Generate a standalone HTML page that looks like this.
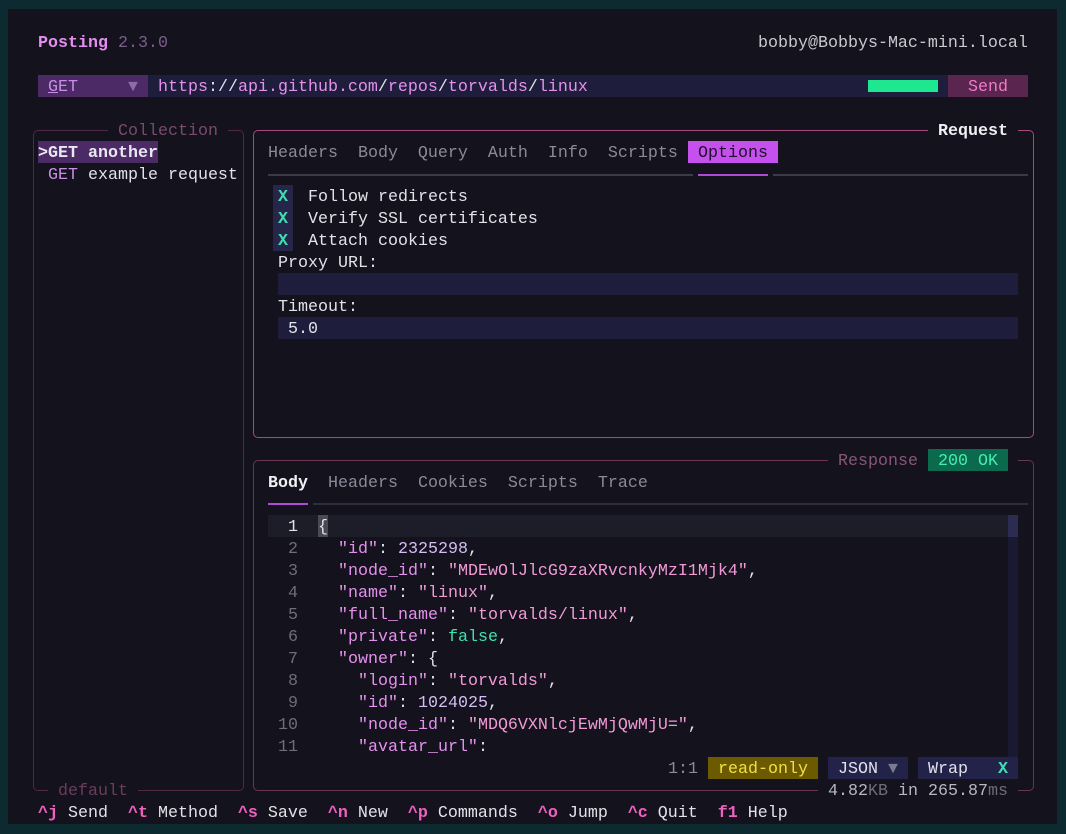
<!DOCTYPE html>
<html><head><meta charset="utf-8"><style>
*{margin:0;padding:0;box-sizing:border-box}
body{width:1066px;height:834px;background:#0c2a30;position:relative;overflow:hidden;font-family:"Liberation Mono","DejaVu Sans Mono",monospace;font-size:16.67px;color:#e2e2ea}
#win{position:absolute;left:8px;top:9px;width:1049px;height:815px;background:#13121d}
.t{position:absolute;white-space:pre;line-height:22px;height:22px;padding-top:2px}
.box{position:absolute;border:1.5px solid;border-radius:5px}
.lbl{position:absolute;white-space:pre;line-height:22px;height:22px;padding-top:2px;background:#13121d}
.m{color:#8c8a99}
.k{color:#e590ec}.s{color:#f29ad6}.n{color:#d4bdf5}.b{color:#3fe0b0}.p{color:#e2e2ea}
.ln{color:#6e6d7a;text-align:right;width:30px}
.pk{color:#f060c0;font-weight:bold}
</style></head><body>
<div id="win"></div>
<div class="t" style="left:38px;top:31px"><b style="color:#e48ff0">Posting</b> <span style="color:#7a5f8a">2.3.0</span></div>
<div class="t" style="left:758px;top:31px;color:#c8c8d0">bobby@Bobbys-Mac-mini.local</div>

<div class="t" style="left:38px;top:75px;width:110px;background:#4b2a66;color:#c98ee6">&nbsp;<u>G</u>ET     <span style="color:#8e6aa8">▼</span></div>
<div class="t" style="left:148px;top:75px;width:800px;background:#1e1e3c"></div>
<div class="t" style="left:158px;top:75px;color:#e590ec">https<span style="color:#e2e2ea">://</span>api.github.com<span style="color:#e2e2ea">/</span>repos<span style="color:#e2e2ea">/</span>torvalds<span style="color:#e2e2ea">/</span>linux</div>
<div style="position:absolute;left:868px;top:80px;width:70px;height:12px;background:#1ee88f"></div>
<div class="t" style="left:948px;top:75px;width:80px;background:#5a2650;color:#f07ac8;text-align:center">Send</div>

<!-- Collection -->
<div class="box" style="left:33px;top:130px;width:211px;height:661px;border-color:#4e2a46"></div>
<div class="lbl" style="left:108px;top:119px;color:#7b4a6c"> Collection </div>
<div class="lbl" style="left:48px;top:779px;color:#6a3d5c"> default </div>
<div class="t" style="left:38px;top:141px;width:120px;background:#4b2a66;color:#e8e8f0;font-weight:bold">&gt;GET another</div>
<div class="t" style="left:38px;top:163px"> <span style="color:#c98ee6">GET</span> example request</div>

<!-- Request -->
<div class="box" style="left:253px;top:130px;width:781px;height:308px;border-color:#a8487f"></div>
<div class="lbl" style="left:928px;top:119px;font-weight:bold;color:#f0f0f4"> Request </div>
<div class="t m" style="left:268px;top:141px">Headers  Body  Query  Auth  Info  Scripts</div>
<div class="t" style="left:688px;top:141px;width:90px;background:#c650ee;color:#1e0f2a"> Options</div>
<div style="position:absolute;left:268px;top:174px;width:425px;height:2px;background:#3a3a48"></div>
<div style="position:absolute;left:698px;top:174px;width:70px;height:2px;background:#b048d8"></div>
<div style="position:absolute;left:773px;top:174px;width:255px;height:2px;background:#3a3a48"></div>
<div class="t" style="left:273px;top:185px;width:20px;height:66px;background:#25264a"></div>
<div class="t b" style="left:278px;top:185px;font-weight:bold">X</div>
<div class="t b" style="left:278px;top:207px;font-weight:bold">X</div>
<div class="t b" style="left:278px;top:229px;font-weight:bold">X</div>
<div class="t" style="left:308px;top:185px">Follow redirects</div>
<div class="t" style="left:308px;top:207px">Verify SSL certificates</div>
<div class="t" style="left:308px;top:229px">Attach cookies</div>
<div class="t" style="left:278px;top:251px">Proxy URL:</div>
<div class="t" style="left:278px;top:273px;width:740px;background:#1e1e3c"></div>
<div class="t" style="left:278px;top:295px">Timeout:</div>
<div class="t" style="left:278px;top:317px;width:740px;background:#1e1e3c"> 5.0</div>

<!-- Response -->
<div class="box" style="left:253px;top:460px;width:781px;height:331px;border-color:#6a3556"></div>
<div class="lbl" style="left:828px;top:449px;color:#8a5578"> Response </div>
<div class="t" style="left:918px;top:449px;width:100px;background:#13121d"></div>
<div class="t" style="left:928px;top:449px;width:80px;background:#0b6a4e;color:#3ff0b0;text-align:center">200 OK</div>
<div class="t" style="left:268px;top:471px"><b style="color:#f0f0f4">Body</b>  <span class="m">Headers  Cookies  Scripts  Trace</span></div>
<div style="position:absolute;left:268px;top:503px;width:40px;height:2px;background:#b048d8"></div>
<div style="position:absolute;left:313px;top:503px;width:715px;height:2px;background:#2e2e3a"></div>
<div style="position:absolute;left:268px;top:515px;width:740px;height:22px;background:#1d1c29"></div>
<div style="position:absolute;left:1008px;top:515px;width:10px;height:242px;background:#191932"></div>
<div style="position:absolute;left:1008px;top:515px;width:10px;height:22px;background:#2c2c52"></div>
<div class="t ln" style="left:268px;top:515px;color:#e2e2ea">1</div>
<div class="t" style="left:318px;top:515px;background:#4a4a55;width:10px">{</div>
<div class="t ln" style="left:268px;top:537px">2</div><div class="t" style="left:318px;top:537px">  <span class="k">"id"</span>: <span class="n">2325298</span>,</div>
<div class="t ln" style="left:268px;top:559px">3</div><div class="t" style="left:318px;top:559px">  <span class="k">"node_id"</span>: <span class="s">"MDEwOlJlcG9zaXRvcnkyMzI1Mjk4"</span>,</div>
<div class="t ln" style="left:268px;top:581px">4</div><div class="t" style="left:318px;top:581px">  <span class="k">"name"</span>: <span class="s">"linux"</span>,</div>
<div class="t ln" style="left:268px;top:603px">5</div><div class="t" style="left:318px;top:603px">  <span class="k">"full_name"</span>: <span class="s">"torvalds/linux"</span>,</div>
<div class="t ln" style="left:268px;top:625px">6</div><div class="t" style="left:318px;top:625px">  <span class="k">"private"</span>: <span class="b">false</span>,</div>
<div class="t ln" style="left:268px;top:647px">7</div><div class="t" style="left:318px;top:647px">  <span class="k">"owner"</span>: {</div>
<div class="t ln" style="left:268px;top:669px">8</div><div class="t" style="left:318px;top:669px">    <span class="k">"login"</span>: <span class="s">"torvalds"</span>,</div>
<div class="t ln" style="left:268px;top:691px">9</div><div class="t" style="left:318px;top:691px">    <span class="k">"id"</span>: <span class="n">1024025</span>,</div>
<div class="t ln" style="left:268px;top:713px">10</div><div class="t" style="left:318px;top:713px">    <span class="k">"node_id"</span>: <span class="s">"MDQ6VXNlcjEwMjQwMjU="</span>,</div>
<div class="t ln" style="left:268px;top:735px">11</div><div class="t" style="left:318px;top:735px">    <span class="k">"avatar_url"</span>:</div>
<div class="t m" style="left:668px;top:757px">1:1</div>
<div class="t" style="left:708px;top:757px;width:110px;background:#6b5a00;color:#f2e040;text-align:center">read-only</div>
<div class="t" style="left:828px;top:757px;width:80px;background:#23234a"> JSON <span style="color:#7a7a90">▼</span></div>
<div class="t" style="left:918px;top:757px;width:100px;background:#23234a"> Wrap   <b class="b">X</b></div>
<div class="lbl" style="left:818px;top:779px;color:#b8b8c4"> 4.82<span style="color:#6e6d7a">KB</span> in 265.87<span style="color:#6e6d7a">ms</span> </div>

<!-- Footer -->
<div class="t" style="left:38px;top:801px"><span class="pk">^j</span> Send  <span class="pk">^t</span> Method  <span class="pk">^s</span> Save  <span class="pk">^n</span> New  <span class="pk">^p</span> Commands  <span class="pk">^o</span> Jump  <span class="pk">^c</span> Quit  <span class="pk">f1</span> Help</div>
</body></html>
